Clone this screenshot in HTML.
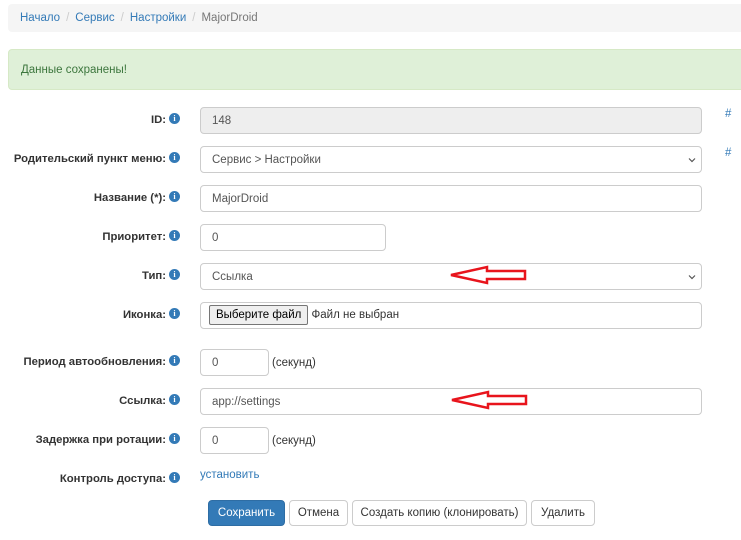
<!DOCTYPE html>
<html><head><meta charset="utf-8"><style>
body{margin:0;width:741px;height:540px;background:#fff;font-family:"Liberation Sans",sans-serif;font-size:11.5px;color:#333;position:relative;overflow:hidden}
.a{position:absolute}
.bc{left:8px;top:4px;width:740px;height:28px;background:#f5f5f5;border-radius:4px;line-height:29px;padding-left:12px;box-sizing:border-box;color:#777}
.bc a{color:#337ab7;text-decoration:none}
.bc span{color:#ccc;padding:0 6px}
.al{left:8px;top:49px;width:740px;height:41px;background:#dff0d8;border:1px solid #d6e9c6;border-radius:4px;box-sizing:border-box;color:#3c763d;line-height:41px;padding-left:12px}
.lb{font-weight:bold;color:#333;text-align:right;white-space:nowrap;font-size:11.3px;margin-top:1px}
.i{display:inline-block;width:11px;height:11px;border-radius:50%;background:#337ab7;color:#fff;font-size:8px;line-height:11px;text-align:center;font-weight:bold;font-family:"Liberation Serif",serif;position:absolute;left:169px}
.in{left:200px;height:27px;border:1px solid #ccc;border-radius:4px;box-sizing:border-box;line-height:27px;padding-left:11px;color:#555;background:#fff}
.sel svg{position:absolute;right:5px;top:10px}
.btn{top:500px;height:26px;border:1px solid #ccc;border-radius:4px;box-sizing:border-box;line-height:25px;text-align:center;background:#fff;color:#333}
</style></head><body>
<div class="a bc"><a>Начало</a><span>/</span><a>Сервис</a><span>/</span><a>Настройки</a><span>/</span>MajorDroid</div>
<div class="a al">Данные сохранены!</div>

<div class="a lb" style="top:113px;left:0;width:166px">ID:</div><div class="i" style="top:113px">i</div>
<div class="a in" style="top:107px;width:502px;background:#eee">148</div>
<div class="a" style="left:725px;top:108px;color:#337ab7">#</div>

<div class="a lb" style="top:152px;left:0;width:166px">Родительский пункт меню:</div><div class="i" style="top:152px">i</div>
<div class="a in sel" style="top:146px;width:502px">Сервис &gt; Настройки<svg width="8" height="6"><path d="M1 1.5L4 4.5L7 1.5" fill="none" stroke="#555" stroke-width="1.2"/></svg></div>
<div class="a" style="left:725px;top:147px;color:#337ab7">#</div>

<div class="a lb" style="top:191px;left:0;width:166px">Название (*):</div><div class="i" style="top:191px">i</div>
<div class="a in" style="top:185px;width:502px">MajorDroid</div>

<div class="a lb" style="top:230px;left:0;width:166px">Приоритет:</div><div class="i" style="top:230px">i</div>
<div class="a in" style="top:224px;width:186px">0</div>

<div class="a lb" style="top:269px;left:0;width:166px">Тип:</div><div class="i" style="top:269px">i</div>
<div class="a in sel" style="top:263px;width:502px">Ссылка<svg width="8" height="6"><path d="M1 1.5L4 4.5L7 1.5" fill="none" stroke="#555" stroke-width="1.2"/></svg></div>

<div class="a lb" style="top:308px;left:0;width:166px">Иконка:</div><div class="i" style="top:308px">i</div>
<div class="a in" style="top:302px;width:502px;padding-left:8px;line-height:25px"><span style="display:inline-block;border:1px solid #767676;background:#efefef;color:#000;padding:0 6px;line-height:18px;border-radius:2px;vertical-align:middle">Выберите файл</span> <span style="color:#333">Файл не выбран</span></div>

<div class="a lb" style="top:355px;left:0;width:166px">Период автообновления:</div><div class="i" style="top:355px">i</div>
<div class="a in" style="top:349px;width:69px">0</div>
<div class="a" style="left:272px;top:357px">(секунд)</div>

<div class="a lb" style="top:394px;left:0;width:166px">Ссылка:</div><div class="i" style="top:394px">i</div>
<div class="a in" style="top:388px;width:502px">app://settings</div>

<div class="a lb" style="top:433px;left:0;width:166px">Задержка при ротации:</div><div class="i" style="top:433px">i</div>
<div class="a in" style="top:427px;width:69px">0</div>
<div class="a" style="left:272px;top:435px">(секунд)</div>

<div class="a lb" style="top:472px;left:0;width:166px">Контроль доступа:</div><div class="i" style="top:472px">i</div>
<div class="a" style="left:200px;top:469px;color:#337ab7">установить</div>

<div class="a btn" style="left:208px;width:77px;background:#337ab7;border-color:#2e6da4;color:#fff">Сохранить</div>
<div class="a btn" style="left:289px;width:59px">Отмена</div>
<div class="a btn" style="left:352px;width:175px">Создать копию (клонировать)</div>
<div class="a btn" style="left:531px;width:64px">Удалить</div>

<svg class="a" style="left:0;top:0" width="741" height="540">
<g fill="none" stroke="#e8141c" stroke-width="2.5" stroke-linejoin="miter">
<polygon points="451,275 487,267 487,271 525,271 525,279 487,279 487,283"/>
<polygon points="452,400 488,392 488,396 526,396 526,404 488,404 488,408"/>
</g></svg>
</body></html>
